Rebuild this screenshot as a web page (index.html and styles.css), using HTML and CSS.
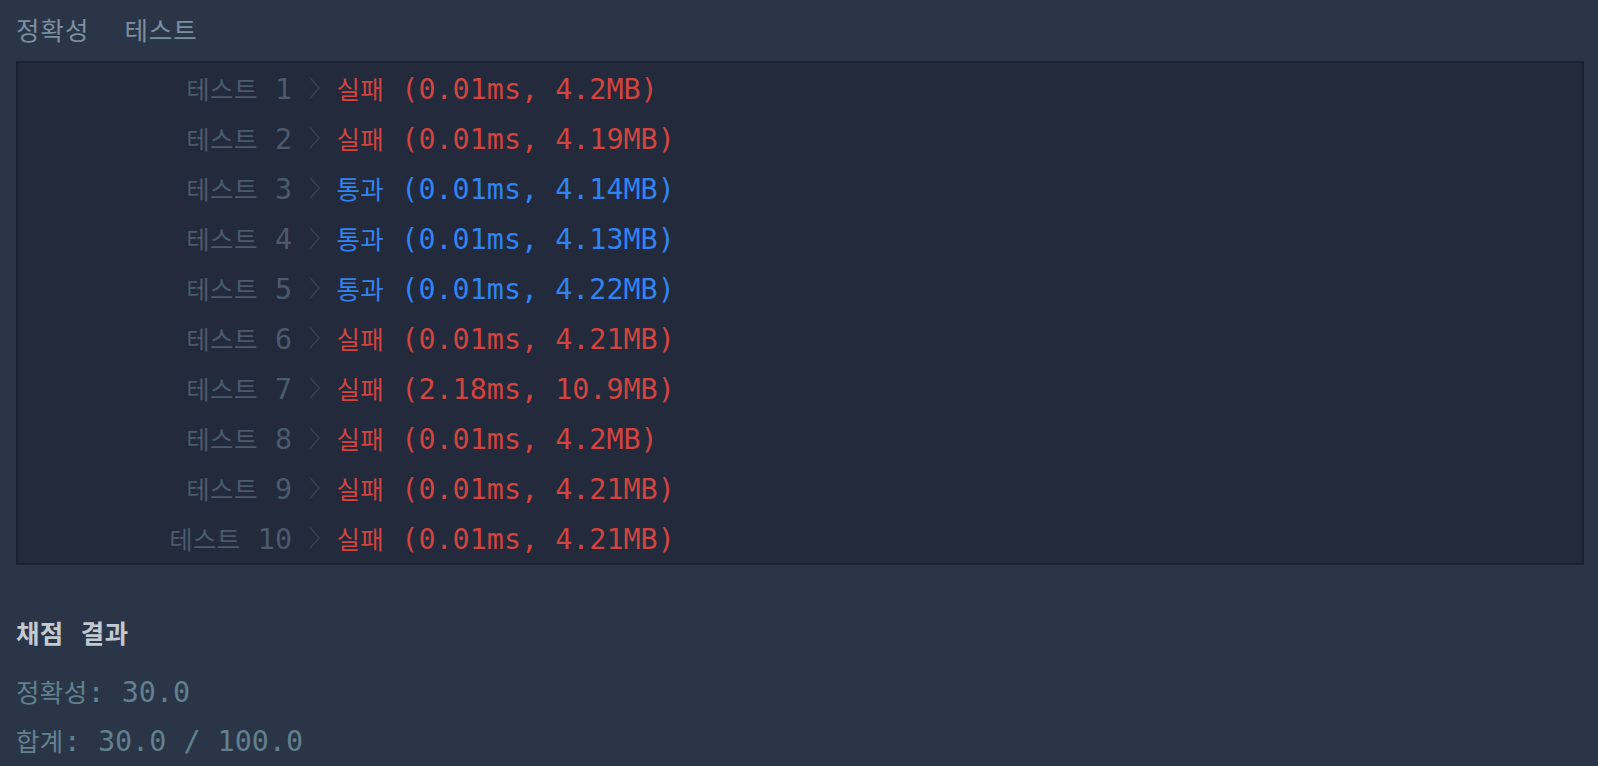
FILE: index.html
```html
<!DOCTYPE html>
<html lang="ko">
<head>
<meta charset="utf-8">
<title>실행 결과</title>
<link rel="stylesheet" href="styles.css">
</head>
<body>
<div class="page">
  <div class="title">
    <span class="ko">정확성</span>
    <span class="ko">테스트</span>
  </div>
  <div class="console">
    <div class="row"><div class="label"><span class="ko">테스트</span> 1</div><span class="chev"><svg viewBox="0 0 11 22" width="11" height="22"><polyline points="0.8,0.5 10.2,11 0.8,21.5"/></svg></span><div class="res fail"><span class="ko">실패</span> (0.01ms, 4.2MB)</div></div>
    <div class="row"><div class="label"><span class="ko">테스트</span> 2</div><span class="chev"><svg viewBox="0 0 11 22" width="11" height="22"><polyline points="0.8,0.5 10.2,11 0.8,21.5"/></svg></span><div class="res fail"><span class="ko">실패</span> (0.01ms, 4.19MB)</div></div>
    <div class="row"><div class="label"><span class="ko">테스트</span> 3</div><span class="chev"><svg viewBox="0 0 11 22" width="11" height="22"><polyline points="0.8,0.5 10.2,11 0.8,21.5"/></svg></span><div class="res pass"><span class="ko">통과</span> (0.01ms, 4.14MB)</div></div>
    <div class="row"><div class="label"><span class="ko">테스트</span> 4</div><span class="chev"><svg viewBox="0 0 11 22" width="11" height="22"><polyline points="0.8,0.5 10.2,11 0.8,21.5"/></svg></span><div class="res pass"><span class="ko">통과</span> (0.01ms, 4.13MB)</div></div>
    <div class="row"><div class="label"><span class="ko">테스트</span> 5</div><span class="chev"><svg viewBox="0 0 11 22" width="11" height="22"><polyline points="0.8,0.5 10.2,11 0.8,21.5"/></svg></span><div class="res pass"><span class="ko">통과</span> (0.01ms, 4.22MB)</div></div>
    <div class="row"><div class="label"><span class="ko">테스트</span> 6</div><span class="chev"><svg viewBox="0 0 11 22" width="11" height="22"><polyline points="0.8,0.5 10.2,11 0.8,21.5"/></svg></span><div class="res fail"><span class="ko">실패</span> (0.01ms, 4.21MB)</div></div>
    <div class="row"><div class="label"><span class="ko">테스트</span> 7</div><span class="chev"><svg viewBox="0 0 11 22" width="11" height="22"><polyline points="0.8,0.5 10.2,11 0.8,21.5"/></svg></span><div class="res fail"><span class="ko">실패</span> (2.18ms, 10.9MB)</div></div>
    <div class="row"><div class="label"><span class="ko">테스트</span> 8</div><span class="chev"><svg viewBox="0 0 11 22" width="11" height="22"><polyline points="0.8,0.5 10.2,11 0.8,21.5"/></svg></span><div class="res fail"><span class="ko">실패</span> (0.01ms, 4.2MB)</div></div>
    <div class="row"><div class="label"><span class="ko">테스트</span> 9</div><span class="chev"><svg viewBox="0 0 11 22" width="11" height="22"><polyline points="0.8,0.5 10.2,11 0.8,21.5"/></svg></span><div class="res fail"><span class="ko">실패</span> (0.01ms, 4.21MB)</div></div>
    <div class="row"><div class="label"><span class="ko">테스트</span> 10</div><span class="chev"><svg viewBox="0 0 11 22" width="11" height="22"><polyline points="0.8,0.5 10.2,11 0.8,21.5"/></svg></span><div class="res fail"><span class="ko">실패</span> (0.01ms, 4.21MB)</div></div>
  </div>
  <div class="summary">
    <div class="sum-title"><span class="ko">채점</span> <span class="ko">결과</span></div>
    <div class="sum-line"><span class="ko">정확성</span>: 30.0</div>
    <div class="sum-line"><span class="ko">합계</span>: 30.0 / 100.0</div>
  </div>
</div>
</body>
</html>
```

FILE: styles.css
```css
html, body {
  margin: 0;
  padding: 0;
  background: #2a3648;
}

.page {
  padding: 0 14px 0 16px;
  font-family: "DejaVu Sans Mono", "Noto Sans CJK KR", monospace;
  font-size: 28.4px;
}

.ko {
  font-family: "Noto Sans CJK KR", "Noto Sans", sans-serif;
  font-size: 25.5px;
  letter-spacing: 0.4px;
}

.title {
  display: flex;
  gap: 35px;
  height: 61px;
  line-height: 58px;
  color: #7b8fa0;
}

.title .ko {
  letter-spacing: 1px;
}

.console {
  background: #222a3b;
  border: 2px solid #1b2231;
}

.row {
  display: flex;
  height: 50px;
  line-height: 49px;
  white-space: nowrap;
}

.label {
  width: 274px;
  text-align: right;
  color: #4b5a6d;
}

.chev {
  width: 44.5px;
  display: flex;
  align-items: center;
  padding-left: 17px;
  padding-bottom: 1px;
  box-sizing: border-box;
}

.chev svg {
  display: block;
  fill: none;
  stroke: #364253;
  stroke-width: 1.4;
}

.res.fail { color: #d2443f; }
.res.pass { color: #3183f2; }

.summary {
  margin-top: 43px;
}

.sum-title {
  height: 48px;
  line-height: 48px;
  color: #c2c9d1;
  margin-bottom: 11px;
  white-space: nowrap;
}

.sum-title .ko {
  font-weight: 700;
}

.sum-line {
  height: 48px;
  line-height: 48px;
  color: #62808f;
  white-space: nowrap;
}

.sum-line + .sum-line {
  margin-top: 1px;
}
```
